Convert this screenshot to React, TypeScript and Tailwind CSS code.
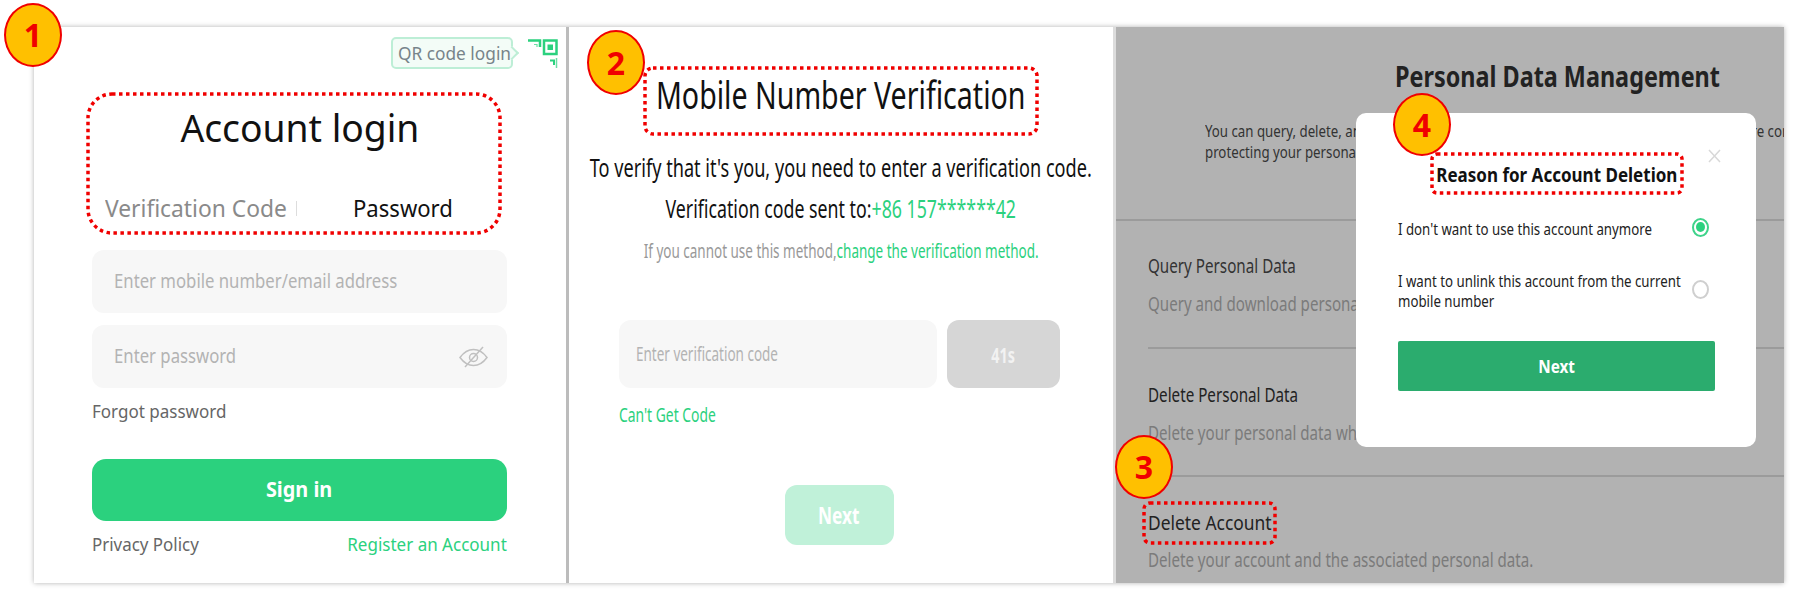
function Badge(props: { n: number; className: string }) {
  return (
    <div
      className={`${props.className} absolute z-20 flex items-center justify-center rounded-[50%] border-2 border-[#f00000] bg-[#ffc000] text-[32px] font-bold text-[#f00000]`}
    >
      {props.n}
    </div>
  );
}

// red dotted annotation frame, square dots like the original
function Dotted(props: { className: string; w: number; h: number; r: number }) {
  return (
    <svg className={`${props.className} absolute z-10`} width={props.w} height={props.h} fill="none">
      <rect
        x="2"
        y="2"
        width={props.w - 4}
        height={props.h - 4}
        rx={props.r}
        stroke="#f00000"
        strokeWidth="3.500"
        strokeDasharray="3.500 3.500"
      />
    </svg>
  );
}

function QrIcon() {
  return (
    <svg width="31" height="30" viewBox="0 0 31 30" fill="none">
      <path d="M1 1.500H13V8" stroke="#2bd17e" strokeWidth="2.500" />
      <path d="M7 5.500H10V8" stroke="#2bd17e" strokeWidth="1.200" opacity="0.7" />
      <rect x="17" y="1.500" width="12.500" height="13.500" stroke="#2bd17e" strokeWidth="2.500" />
      <rect x="20.500" y="5.500" width="5.500" height="5.500" fill="#2bd17e" />
      <path d="M23 21.500H27V26" stroke="#2bd17e" strokeWidth="2" />
      <path d="M29.500 19V29" stroke="#2bd17e" strokeWidth="1.500" opacity="0.7" />
    </svg>
  );
}

function EyeOff() {
  return (
    <svg width="29" height="22" viewBox="0 0 29 22" fill="none" stroke="#c0c0c0" strokeWidth="1.500">
      <path d="M1 11.500C5 6 9.500 3.500 14.500 3.500S24 6 28 11.500C24 17 19.500 19.500 14.500 19.500S5 17 1 11.500Z" />
      <circle cx="14.500" cy="11.500" r="4" />
      <path d="M24 1L6 21" />
    </svg>
  );
}

function Field(props: { text: string; className?: string; children?: any }) {
  return (
    <div className={`${props.className ?? ""} flex h-[63px] items-center justify-between rounded-[12px] bg-[#f7f7f7] pl-[22px] pr-[19px] text-[#b3b3b3]`}>
      <span className="origin-left scale-x-[0.88] whitespace-nowrap text-[19px]">{props.text}</span>
      {props.children}
    </div>
  );
}

function LoginPanel() {
  return (
    <div className="h-[556px] w-[535px] shrink-0 border-r-[3px] border-[#bcbcbc] bg-white pl-[58px] pr-[59px]">
      <div className="-mr-[51px] flex h-[42px] items-end justify-end">
        <div className="relative mr-[14px] flex h-[32px] w-[122px] items-center rounded-[5px] border-2 border-[#bdeed6] bg-[#f3fcf7] pl-[5px] text-[#77848a]">
          <div className="absolute -right-[6px] top-[9px] h-[10px] w-[10px] rotate-45 border-r-2 border-t-2 border-[#bdeed6] bg-[#f3fcf7]" />
          <span className="relative origin-left scale-x-[0.96] whitespace-nowrap text-[18px]">QR code login</span>
        </div>
        <QrIcon />
      </div>
      <div className="mt-[29px] flex h-[58px] items-center justify-center text-[38px] text-[#111]">
        <span className="scale-x-[0.98] whitespace-nowrap">Account login</span>
      </div>
      <div className="mt-[34px] flex h-[36px] items-center text-[24px]">
        <span className="ml-[13px] origin-left scale-x-[0.95] whitespace-nowrap text-[#8a8a8a]">Verification Code</span>
        <div className="ml-0 h-[15px] w-px bg-[#dddddd]" />
        <span className="ml-[56px] origin-left scale-x-[0.92] whitespace-nowrap text-[#111]">Password</span>
      </div>
      <Field className="mt-[24px]" text="Enter mobile number/email address" />
      <Field className="mt-[12px]" text="Enter password">
        <EyeOff />
      </Field>
      <div className="mt-[11px] h-[24px] text-[18px] leading-[24px] text-[#666]">
        <span className="inline-block origin-left scale-x-[0.945] whitespace-nowrap">Forgot password</span>
      </div>
      <div className="mt-[36px] flex h-[62px] items-center justify-center rounded-[14px] bg-[#2bd17e] text-[21px] font-bold text-white">
        <span className="scale-x-[0.945]">Sign in</span>
      </div>
      <div className="mt-[11px] flex h-[24px] justify-between text-[18px] leading-[24px]">
        <span className="origin-left scale-x-[0.94] whitespace-nowrap text-[#666]">Privacy Policy</span>
        <span className="origin-right scale-x-[0.945] whitespace-nowrap text-[#2bd17e]">Register an Account</span>
      </div>
    </div>
  );
}

function VerifyPanel() {
  return (
    <div className="h-[556px] w-[547px] shrink-0 border-r-[3px] border-[#dcdcdc] bg-white pt-[42px]">
      <div className="flex h-[50px] items-center justify-center text-[38px] text-[#111]">
        <span className="scale-x-[0.752] whitespace-nowrap">Mobile Number Verification</span>
      </div>
      <div className="mt-[32px] flex h-[34px] items-center justify-center text-[25px] text-[#111]">
        <span className="scale-x-[0.726] whitespace-nowrap">To verify that it's you, you need to enter a verification code.</span>
      </div>
      <div className="mt-[7px] flex h-[34px] items-center justify-center text-[25px] text-[#111]">
        <span className="scale-x-[0.71] whitespace-nowrap">
          Verification code sent to:<span className="text-[#2bd17e]">+86 157******42</span>
        </span>
      </div>
      <div className="mt-[12px] flex h-[26px] items-center justify-center text-[19px] text-[#999]">
        <span className="scale-x-[0.71] whitespace-nowrap">
          If you cannot use this method,<span className="text-[#2bd17e]">change the verification method.</span>
        </span>
      </div>
      <div className="ml-[50px] mt-[56px] flex gap-[10px]">
        <div className="flex h-[68px] w-[318px] items-center rounded-[12px] bg-[#f7f7f7] pl-[17px] text-[19px] text-[#b3b3b3]">
          <span className="origin-left scale-x-[0.71] whitespace-nowrap">Enter verification code</span>
        </div>
        <div className="flex h-[68px] w-[113px] items-center justify-center rounded-[12px] bg-[#d6d6d6] text-[22px] font-bold text-[#f2f2f2]">
          <span className="scale-x-[0.65]">41s</span>
        </div>
      </div>
      <div className="ml-[50px] mt-[14px] h-[26px] text-[19px] leading-[26px] text-[#2bd17e]">
        <span className="inline-block origin-left scale-x-[0.73] whitespace-nowrap">Can't Get Code</span>
      </div>
      <div className="mx-auto mt-[57px] flex h-[60px] w-[109px] -translate-x-[2px] items-center justify-center rounded-[12px] bg-[#c0f1d9] text-[24px] font-bold text-white">
        <span className="scale-x-[0.72]">Next</span>
      </div>
    </div>
  );
}

function DataRow(props: { title: string; desc: string; titleClass: string; titleMt: string; descMt: string }) {
  return (
    <div>
      <div className={`${props.titleMt} h-[28px] text-[20px] leading-[28px]`}>
        <span className={`${props.titleClass} inline-block origin-left whitespace-nowrap`}>{props.title}</span>
      </div>
      <div className={`${props.descMt} h-[26px] text-[19px] leading-[26px] text-[#7b7b7b]`}>
        <span className="inline-block origin-left scale-x-[0.795] whitespace-nowrap">{props.desc}</span>
      </div>
    </div>
  );
}

function DataPanel() {
  return (
    <div className="relative h-[556px] w-[668px] shrink-0 overflow-hidden bg-[#b2b2b2]">
      <div className="h-[69px] pl-[279px] pt-[29px] text-[28px] font-bold leading-[40px] text-[#222]">
        <span className="inline-block origin-left scale-x-[0.835] whitespace-nowrap">Personal Data Management</span>
      </div>
      <div className="mt-[24px] pl-[89px] text-[17px] leading-[21px] text-[#333]">
        <div className="w-max origin-left scale-x-[0.78]">You can query, delete, and manage your personal data here at any time, and since, we are committed to</div>
        <div className="w-max origin-left scale-x-[0.78]">protecting your personal data and your privacy.</div>
      </div>
      <div className="mt-[57px] border-t-2 border-[#9b9b9b]" />
      <div className="pl-[32px]">
        <DataRow titleMt="mt-[31px]" descMt="mt-[11px]" title="Query Personal Data" titleClass="scale-x-[0.76] text-[#333]" desc="Query and download personal data that we hold about you." />
        <div className="mt-[30px] border-t-2 border-[#9b9b9b]" />
        <DataRow titleMt="mt-[32px]" descMt="mt-[11px]" title="Delete Personal Data" titleClass="scale-x-[0.76] text-[#222]" desc="Delete your personal data while keeping your account." />
        <div className="mt-[29px] border-t-2 border-[#9b9b9b]" />
        <DataRow titleMt="mt-[32px]" descMt="mt-[10px]" title="Delete Account" titleClass="scale-x-[0.87] text-[#222]" desc="Delete your account and the associated personal data." />
      </div>

      <div className="absolute left-[240px] top-[86px] h-[334px] w-[400px] rounded-[10px] bg-white pl-[42px] pr-[41px] pt-[48px]">
        <svg className="absolute left-[352px] top-[36px]" width="13" height="14" viewBox="0 0 13 14" fill="none" stroke="#d8d8d8" strokeWidth="1.500">
          <path d="M1 1L12 13M12 1L1 13" />
        </svg>
        <div className="flex h-[28px] items-center justify-center text-[20px] font-bold text-[#111]">
          <span className="scale-x-[0.85] whitespace-nowrap">Reason for Account Deletion</span>
        </div>
        <div className="mt-[28px] flex h-[24px] items-center text-[17px] text-[#222]">
          <span className="w-0 flex-1 origin-left scale-x-[0.78] whitespace-nowrap">I don't want to use this account anymore</span>
          <div className="mb-[4px] mr-[6px] flex h-[19px] w-[17px] shrink-0 items-center justify-center rounded-[50%] border-2 border-[#3fd38a]">
            <div className="h-[10px] w-[9px] rounded-[50%] bg-[#2bd17e]" />
          </div>
        </div>
        <div className="mt-[30px] flex h-[40px] items-center text-[17px] leading-[20px] text-[#222]">
          <div className="w-0 flex-1">
            <div className="origin-left scale-x-[0.78] whitespace-nowrap">I want to unlink this account from the current</div>
            <div className="origin-left scale-x-[0.78] whitespace-nowrap">mobile number</div>
          </div>
          <div className="mb-[4px] mr-[6px] h-[19px] w-[17px] shrink-0 rounded-[50%] border-2 border-[#cfcfcf]" />
        </div>
        <div className="mt-[30px] flex h-[50px] items-center justify-center rounded-[2px] bg-[#2bac6e] text-[18px] font-bold text-white">
          <span className="scale-x-[0.85]">Next</span>
        </div>
      </div>
    </div>
  );
}

export default function App() {
  return (
    <div className="relative h-[594px] w-[1795px] overflow-hidden bg-white [font-family:'Noto_Sans',sans-serif]">
      <div className="pl-[34px] pt-[27px]">
        <div className="flex w-max shadow-[0_0_5px_rgba(0,0,0,0.3)]">
          <LoginPanel />
          <VerifyPanel />
          <DataPanel />
        </div>
      </div>

      {/* annotations on top of the screenshots */}
      <Badge n={1} className="left-[4px] top-[3px] h-[64px] w-[58px]" />
      <Badge n={2} className="left-[587px] top-[30px] h-[65px] w-[58px]" />
      <Badge n={3} className="left-[1115px] top-[435px] h-[64px] w-[58px]" />
      <Badge n={4} className="left-[1393px] top-[93px] h-[63px] w-[58px]" />
      <Dotted className="left-[86px] top-[92px]" w={416} h={143} r={24} />
      <Dotted className="left-[643px] top-[66px]" w={396} h={70} r={8} />
      <Dotted className="left-[1142px] top-[501px]" w={135} h={44} r={6} />
      <Dotted className="left-[1430px] top-[152px]" w={254} h={43} r={5} />
    </div>
  );
}
